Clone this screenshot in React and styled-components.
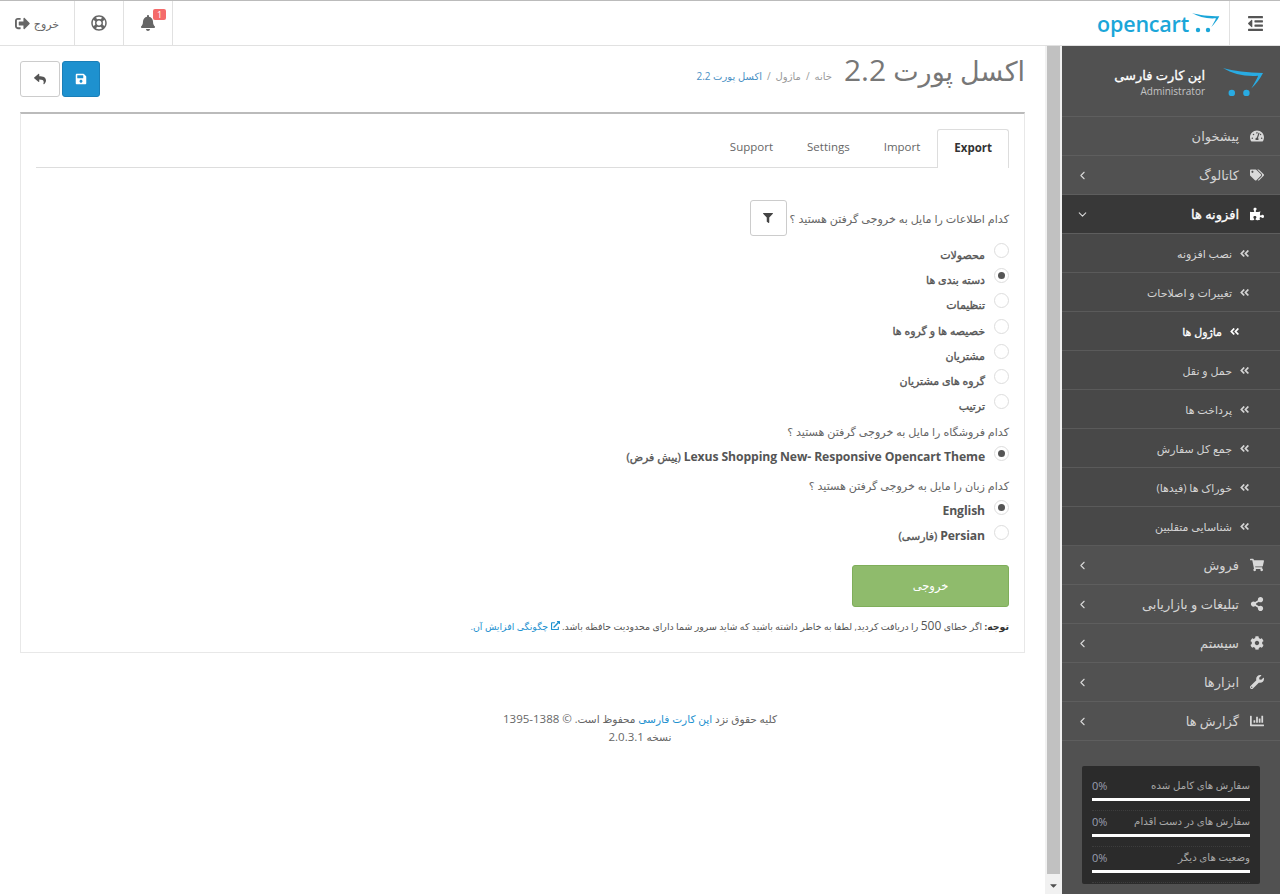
import React from "react"
import styled, { createGlobalStyle } from "styled-components"
import { ChevronDown, ChevronLeft } from "lucide-react"
import {
  FaBell,
  FaCaretDown,
  FaChartBar,
  FaCog,
  FaExternalLinkAlt,
  FaFilter,
  FaRegLifeRing,
  FaPuzzlePiece,
  FaReply,
  FaSave,
  FaShareAlt,
  FaShoppingCart,
  FaSignOutAlt,
  FaTachometerAlt,
  FaTags,
  FaWrench,
  FaAngleDoubleLeft,
  FaOutdent,
} from "react-icons/fa"

const GlobalStyle = createGlobalStyle`
  html, body {
    margin: 0;
    height: 100%;
    overflow: hidden;
    background: #fff;
  }

  body {
    font-family: "Open Sans", "DejaVu Sans", sans-serif;
    font-size: 12px;
    color: #666;
  }

  * {
    box-sizing: border-box;
  }
`

const Page = styled.div`
  direction: rtl;
  width: 1280px;
  height: 894px;
  display: flex;
  flex-direction: column;
  overflow: hidden;
  border-top: 1px solid #bbb;
`

const Header = styled.header`
  height: 45px;
  flex: none;
  display: flex;
  align-items: stretch;
  border-bottom: 1px solid #e1e1e1;
`

const ToggleButton = styled.div`
  width: 51px;
  display: flex;
  align-items: center;
  justify-content: center;
  color: #555;
  font-size: 17px;
  border-left: 1px solid #e1e1e1;
`

const Brand = styled.div`
  display: flex;
  align-items: center;
  gap: 3px;
  padding-right: 9px;
  flex: 1;
`

const LogoText = styled.span`
  direction: ltr;
  font-size: 21.5px;
  font-weight: 600;
  letter-spacing: -0.2px;
  color: #1ba6d9;
`

const HeaderItem = styled.div`
  position: relative;
  height: 100%;
  width: ${(p) => p.$width}px;
  display: flex;
  align-items: center;
  justify-content: center;
  gap: 4px;
  color: #666;
  border-right: 1px solid #e1e1e1;
  font-size: 11px;
`

const Badge = styled.span`
  position: absolute;
  top: 8px;
  left: 29px;
  min-width: 13px;
  height: 11px;
  border-radius: 2px;
  background: #f56b6b;
  color: #fff;
  font-size: 9px;
  line-height: 11px;
  text-align: center;
`

const Body = styled.div`
  flex: 1;
  min-height: 0;
  display: flex;
`

const Sidebar = styled.nav`
  width: 218px;
  flex: none;
  background: #515151;
  display: flex;
  flex-direction: column;
`

const Profile = styled.div`
  height: 71px;
  display: flex;
  align-items: center;
  gap: 18px;
  padding: 3px 16px 0 0;
  border-bottom: 1px solid #5e5e5e;
`

const ProfileText = styled.div`
  display: flex;
  flex-direction: column;
  gap: 2px;
`

const ProfileName = styled.div`
  color: #fff;
  font-size: 13px;
  line-height: 16px;
  -webkit-text-stroke: 0.3px #fff;
`

const ProfileRole = styled.div`
  color: #c4c4c4;
  font-size: 10px;
  line-height: 13px;
  text-align: right;
`

const MenuRow = styled.div`
  height: 39px;
  flex: none;
  display: flex;
  align-items: center;
  padding: 0 14px 0 14px;
  color: ${(p) => (p.$open ? "#fff" : "#d4d4d4")};
  background: ${(p) => (p.$open ? "#383838" : "transparent")};
  font-size: 13px;
  -webkit-text-stroke: ${(p) => (p.$open ? "0.3px #fff" : "0")};
  border-bottom: 1px solid #5e5e5e;
`

const MenuIcon = styled.span`
  width: 18px;
  display: flex;
  justify-content: center;
  margin-left: 9px;
  font-size: 14px;
  color: ${(p) => (p.$open ? "#fff" : "#d8d8d8")};
`

const MenuArrow = styled.span`
  margin-right: auto;
  display: flex;
  color: #d8d8d8;
`

const SubRow = styled.div`
  height: 39px;
  flex: none;
  display: flex;
  align-items: center;
  gap: 7px;
  padding-right: ${(p) => (p.$active ? 40 : 30)}px;
  background: #484848;
  color: ${(p) => (p.$active ? "#fff" : "#d4d4d4")};
  font-size: 11px;
  -webkit-text-stroke: ${(p) => (p.$active ? "0.3px #fff" : "0")};
  border-bottom: 1px solid #5a5a5a;
`

const SubIcon = styled.span`
  display: flex;
  font-size: 11px;
`

const StatsBox = styled.div`
  margin: 25px 20px 0;
  padding: 9px 10px 0;
  height: 118px;
  background: #2b2b2b;
  border-radius: 2px;
`

const StatRow = styled.div`
  height: 36px;
  padding-top: 3px;
  color: #a8a8a8;
  font-size: 10.2px;
  border-bottom: 1px dotted #3d3d3d;
`

const StatLine = styled.div`
  display: flex;
  justify-content: space-between;
  line-height: 15px;
`

const StatValue = styled.span`
  direction: ltr;
  color: #9a9fb0;
  font-size: 11px;
`

const StatBar = styled.div`
  height: 3px;
  margin-top: 5px;
  background: #fff;
`

const Scrollbar = styled.div`
  width: 17px;
  flex: none;
  display: flex;
  flex-direction: column;
  padding: 0 2px;
  background: #f1f1f1;
`

const ScrollThumb = styled.div`
  flex: 1;
  background: #c1c1c1;
`

const ScrollButton = styled.div`
  height: 20px;
  display: flex;
  align-items: center;
  justify-content: center;
  padding-top: 3px;
  color: #505050;
  font-size: 11px;
`

const Content = styled.main`
  flex: 1;
  min-width: 0;
  padding: 0 20px;
`

const PageHeader = styled.div`
  height: 66px;
  display: flex;
  align-items: flex-start;
`

const Title = styled.h1`
  margin: 4px 0 0;
  font-size: 27px;
  font-weight: 400;
  color: #777;
  line-height: 40px;
`

const TitleNumber = styled.span`
  font-size: 30px;
`

const Breadcrumb = styled.div`
  display: flex;
  gap: 5px;
  margin: 23px 12px 0 0;
  font-size: 10px;
  line-height: 14px;
  color: #999;
`

const CrumbCurrent = styled.span`
  color: #4a90c4;
`

const Actions = styled.div`
  margin: 15px auto 0 0;
  display: flex;
  gap: 2px;
`

const IconButton = styled.div`
  width: ${(p) => p.$width}px;
  height: 36px;
  display: flex;
  align-items: center;
  justify-content: center;
  border-radius: 3px;
  border: 1px solid ${(p) => (p.$primary ? "#1a7fb8" : "#ccc")};
  background: ${(p) => (p.$primary ? "#1e91cf" : "#fff")};
  color: ${(p) => (p.$primary ? "#fff" : "#555")};
  font-size: 12px;
`

const Panel = styled.section`
  height: 541px;
  padding: 15px 15px 0;
  border: 1px solid #e8e8e8;
  border-top: 2px solid #bbb;
`

const Tabs = styled.div`
  display: flex;
  height: 39px;
  border-bottom: 1px solid #ddd;
`

const Tab = styled.div`
  height: ${(p) => (p.$active ? 39 : 38)}px;
  padding: 0 ${(p) => (p.$active ? 16 : 17)}px 3px;
  display: flex;
  align-items: center;
  direction: ltr;
  font-size: 11.5px;
  font-weight: ${(p) => (p.$active ? 700 : 400)};
  color: ${(p) => (p.$active ? "#333" : "#666")};
  background: #fff;
  border: ${(p) => (p.$active ? "1px solid #ddd" : "none")};
  border-bottom: none;
  border-radius: 3px 3px 0 0;
`

const Form = styled.form`
  padding-top: 32px;
`

const Question = styled.div`
  display: flex;
  align-items: center;
  gap: 3px;
  min-height: ${(p) => (p.$tight ? 24 : 36)}px;
  margin-top: ${(p) => p.$top || 0}px;
  font-size: 11.15px;
  color: #666;
`

const FilterButton = styled.div`
  width: 37px;
  height: 36px;
  display: flex;
  align-items: center;
  justify-content: center;
  border: 1px solid #ccc;
  border-radius: 3px;
  font-size: 10px;
  color: #444;
`

const RadioList = styled.div`
  display: flex;
  flex-direction: column;
  margin-top: ${(p) => p.$top || 0}px;
`

const RadioRow = styled.label`
  height: 25.2px;
  display: flex;
  align-items: center;
  gap: 9px;
  font-size: 11px;
  color: #555;
  -webkit-text-stroke: 0.35px #555;
`

const RadioMark = styled.span`
  width: 15px;
  height: 15px;
  flex: none;
  display: flex;
  align-items: center;
  justify-content: center;
  margin-top: -6px;
  border: 1px solid #ddd;
  border-radius: 50%;

  &::after {
    content: "";
    width: 7px;
    height: 7px;
    border-radius: 50%;
    background: ${(p) => (p.$checked ? "#555" : "transparent")};
  }
`

const RadioText = styled.span`
  margin-top: ${(p) => (p.$latin ? 0 : 2)}px;
`

const LatinLabel = styled.span`
  font-size: 12.2px;
  font-weight: 700;
  letter-spacing: -0.1px;
  -webkit-text-stroke: 0;
`

const SubmitButton = styled.div`
  width: 157px;
  height: 42px;
  margin-top: 17px;
  display: flex;
  align-items: center;
  justify-content: center;
  background: #8fbb6c;
  border: 1px solid #7fae5a;
  border-radius: 3px;
  color: #fff;
  font-size: 11.5px;
`

const Note = styled.p`
  margin: 11px 0 0;
  font-size: 9.4px;
  line-height: 16px;
  color: #555;
  white-space: nowrap;

  b {
    color: #333;
  }
`

const NoteNumber = styled.span`
  font-size: 12px;
`

const NoteLink = styled.a`
  color: #1e91cf;
`

const Footer = styled.footer`
  margin-top: 57px;
  padding-left: 235px;
  text-align: center;
  font-size: 10.6px;
  line-height: 18px;
  color: #666;
`

const FooterNumber = styled.span`
  font-size: 11.5px;
`

const FooterLink = styled.a`
  color: #1e91cf;
`

const CartLogo = ({ width, color }) => (
  <svg width={width} viewBox="0 0 42 30" aria-hidden="true">
    <path d="M0 0 C10 3 26 5 41 5 C38 11 34 16 29 21 C32 16 35 11 36 8 C22 9 10 6 0 0 Z" fill={color} />
    <circle cx="9" cy="25.5" r="3.3" fill={color} />
    <circle cx="24" cy="25.5" r="3.3" fill={color} />
  </svg>
)

const menuTop = [
  { label: "پیشخوان", icon: FaTachometerAlt },
  { label: "کاتالوگ", icon: FaTags, arrow: true },
]

const subMenu = [
  { label: "نصب افزونه" },
  { label: "تغییرات و اصلاحات" },
  { label: "ماژول ها", active: true },
  { label: "حمل و نقل" },
  { label: "پرداخت ها" },
  { label: "جمع کل سفارش" },
  { label: "خوراک ها (فیدها)" },
  { label: "شناسایی متقلبین" },
]

const menuBottom = [
  { label: "فروش", icon: FaShoppingCart },
  { label: "تبلیغات و بازاریابی", icon: FaShareAlt },
  { label: "سیستم", icon: FaCog },
  { label: "ابزارها", icon: FaWrench },
  { label: "گزارش ها", icon: FaChartBar },
]

const stats = ["سفارش های کامل شده", "سفارش های در دست اقدام", "وضعیت های دیگر"]

const dataTypes = [
  { label: "محصولات" },
  { label: "دسته بندی ها", checked: true },
  { label: "تنظیمات" },
  { label: "خصیصه ها و گروه ها" },
  { label: "مشتریان" },
  { label: "گروه های مشتریان" },
  { label: "ترتیب" },
]

const Radio = ({ label, latin, checked }) => (
  <RadioRow>
    <RadioMark $checked={checked} />
    <RadioText $latin={latin}>
      {latin && <LatinLabel>{latin}</LatinLabel>} {label}
    </RadioText>
  </RadioRow>
)

const App = () => (
  <Page>
    <GlobalStyle />
    <Header>
      <ToggleButton>
        <FaOutdent />
      </ToggleButton>
      <Brand>
        <CartLogo width={28} color="#1ba6d9" />
        <LogoText>opencart</LogoText>
      </Brand>
      <HeaderItem $width={49}>
        <FaBell size={16} />
        <Badge>1</Badge>
      </HeaderItem>
      <HeaderItem $width={49}>
        <FaRegLifeRing size={16} />
      </HeaderItem>
      <HeaderItem $width={75}>
        خروج
        <FaSignOutAlt size={15} />
      </HeaderItem>
    </Header>
    <Body>
      <Sidebar>
        <Profile>
          <CartLogo width={41} color="#29abe2" />
          <ProfileText>
            <ProfileName>اپن کارت فارسی</ProfileName>
            <ProfileRole>Administrator</ProfileRole>
          </ProfileText>
        </Profile>
        {menuTop.map(({ label, icon: Icon, arrow }) => (
          <MenuRow key={label}>
            <MenuIcon>
              <Icon />
            </MenuIcon>
            {label}
            {arrow && (
              <MenuArrow>
                <ChevronLeft size={13} strokeWidth={2} />
              </MenuArrow>
            )}
          </MenuRow>
        ))}
        <MenuRow $open>
          <MenuIcon $open>
            <FaPuzzlePiece />
          </MenuIcon>
          افزونه ها
          <MenuArrow>
            <ChevronDown size={13} strokeWidth={2} />
          </MenuArrow>
        </MenuRow>
        {subMenu.map(({ label, active }) => (
          <SubRow key={label} $active={active}>
            <SubIcon>
              <FaAngleDoubleLeft />
            </SubIcon>
            {label}
          </SubRow>
        ))}
        {menuBottom.map(({ label, icon: Icon }) => (
          <MenuRow key={label}>
            <MenuIcon>
              <Icon />
            </MenuIcon>
            {label}
            <MenuArrow>
              <ChevronLeft size={13} strokeWidth={2} />
            </MenuArrow>
          </MenuRow>
        ))}
        <StatsBox>
          {stats.map((label) => (
            <StatRow key={label}>
              <StatLine>
                <span>{label}</span>
                <StatValue>0%</StatValue>
              </StatLine>
              <StatBar />
            </StatRow>
          ))}
        </StatsBox>
      </Sidebar>
      <Scrollbar>
        <ScrollThumb />
        <ScrollButton>
          <FaCaretDown />
        </ScrollButton>
      </Scrollbar>
      <Content>
        <PageHeader>
          <Title>
            اکسل پورت <TitleNumber>2.2</TitleNumber>
          </Title>
          <Breadcrumb>
            <span>خانه</span>
            <span>/</span>
            <span>ماژول</span>
            <span>/</span>
            <CrumbCurrent>اکسل پورت 2.2</CrumbCurrent>
          </Breadcrumb>
          <Actions>
            <IconButton $primary $width={38}>
              <FaSave />
            </IconButton>
            <IconButton $width={40}>
              <FaReply />
            </IconButton>
          </Actions>
        </PageHeader>
        <Panel>
          <Tabs>
            <Tab $active>Export</Tab>
            <Tab>Import</Tab>
            <Tab>Settings</Tab>
            <Tab>Support</Tab>
          </Tabs>
          <Form>
            <Question>
              کدام اطلاعات را مایل به خروجی گرفتن هستید ؟
              <FilterButton>
                <FaFilter />
              </FilterButton>
            </Question>
            <RadioList $top={5}>
              {dataTypes.map((item) => (
                <Radio key={item.label} {...item} />
              ))}
            </RadioList>
            <Question $tight $top={2}>کدام فروشگاه را مایل به خروجی گرفتن هستید ؟</Question>
            <RadioList $top={1}>
              <Radio checked latin="Lexus Shopping New- Responsive Opencart Theme" label="(پیش فرض)" />
            </RadioList>
            <Question $tight $top={4}>کدام زبان را مایل به خروجی گرفتن هستید ؟</Question>
            <RadioList>
              <Radio checked latin="English" />
              <Radio latin="Persian" label="(فارسی)" />
            </RadioList>
            <SubmitButton>خروجی</SubmitButton>
            <Note>
              <b>توجه:</b> اگر خطای <NoteNumber>500</NoteNumber> را دریافت کردید, لطفا به خاطر داشته باشید که شاید سرور شما دارای محدودیت حافظه باشد.{" "}
              <NoteLink>
                <FaExternalLinkAlt size={9} /> چگونگی افزایش آن.
              </NoteLink>
            </Note>
          </Form>
        </Panel>
        <Footer>
          کلیه حقوق نزد <FooterLink>اپن کارت فارسی</FooterLink> محفوظ است. <FooterNumber>© 1388-1395</FooterNumber>
          <br />
          نسخه <FooterNumber>2.0.3.1</FooterNumber>
        </Footer>
      </Content>
    </Body>
  </Page>
)

export default App
